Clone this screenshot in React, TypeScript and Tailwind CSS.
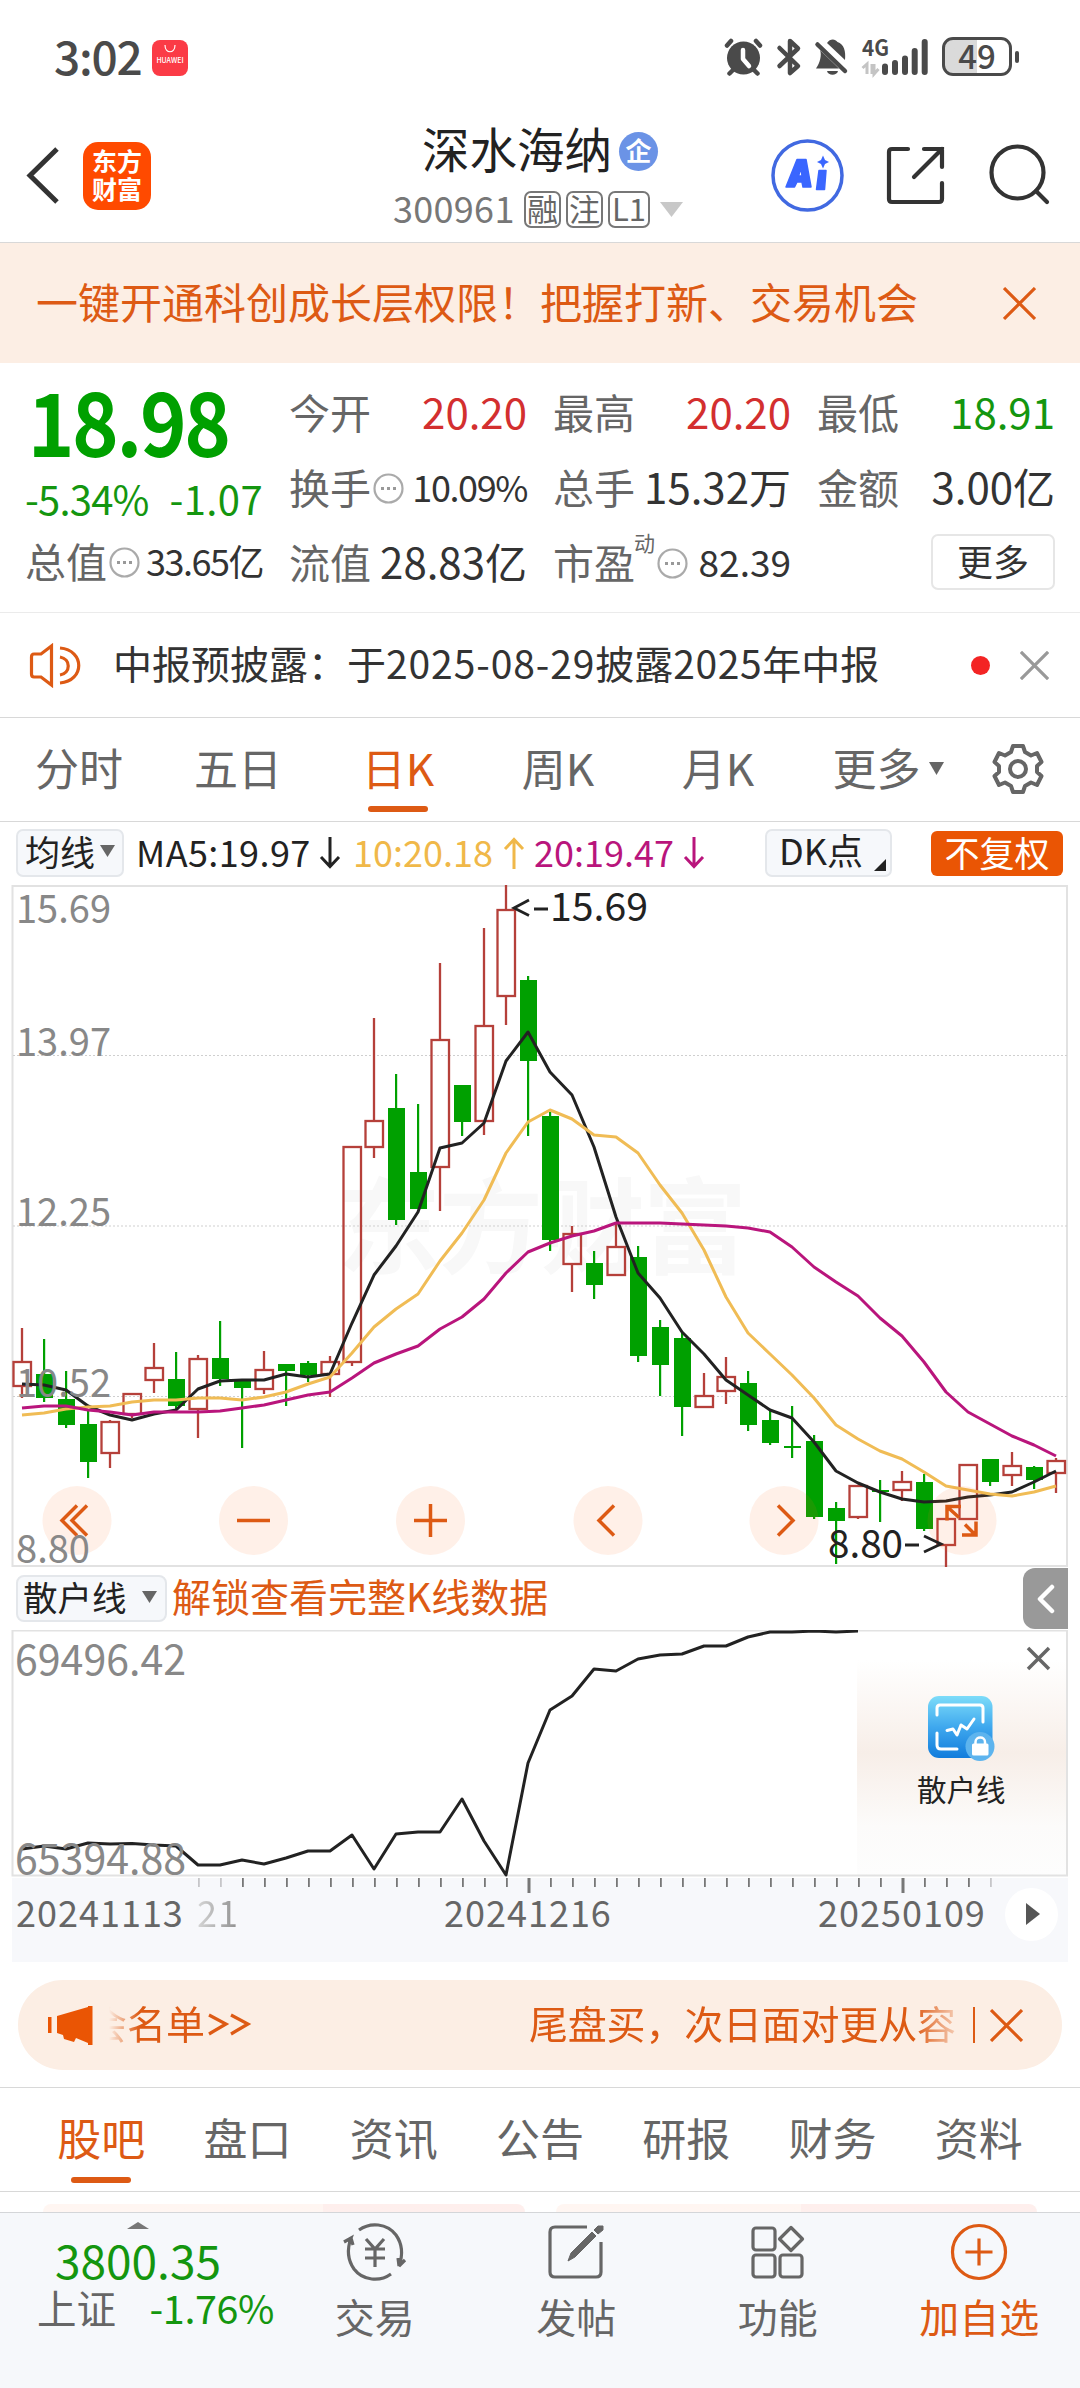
import type { ReactNode } from "react";

type Candle = [kind: "up" | "down", top: number, bottom: number, high: number, low: number];

const STEP = 22;
const FIRST_X = 22;

// body top / body bottom / high / low, in chart units
const CANDLES: Candle[] = [
  ["up", 1362, 1386, 1328, 1398],
  ["down", 1374, 1398, 1339, 1402],
  ["down", 1399, 1425, 1371, 1428],
  ["down", 1424, 1462, 1411, 1478],
  ["up", 1422, 1453, 1420, 1468],
  ["up", 1394, 1414, 1394, 1418],
  ["up", 1368, 1380, 1343, 1393],
  ["down", 1379, 1406, 1352, 1410],
  ["up", 1359, 1409, 1355, 1438],
  ["down", 1358, 1379, 1321, 1386],
  ["down", 1381, 1388, 1380, 1448],
  ["up", 1370, 1389, 1351, 1394],
  ["down", 1364, 1371, 1364, 1406],
  ["down", 1363, 1375, 1361, 1382],
  ["up", 1362, 1374, 1356, 1397],
  ["up", 1147, 1362, 1147, 1366],
  ["up", 1121, 1147, 1018, 1158],
  ["down", 1108, 1220, 1074, 1225],
  ["down", 1172, 1209, 1104, 1209],
  ["up", 1040, 1167, 963, 1211],
  ["down", 1085, 1122, 1085, 1136],
  ["up", 1026, 1121, 928, 1135],
  ["up", 910, 996, 885, 1025],
  ["down", 980, 1061, 976, 1136],
  ["down", 1116, 1240, 1112, 1251],
  ["up", 1234, 1264, 1226, 1292],
  ["down", 1263, 1285, 1251, 1299],
  ["up", 1247, 1275, 1222, 1275],
  ["down", 1257, 1356, 1246, 1362],
  ["down", 1327, 1365, 1320, 1396],
  ["down", 1338, 1407, 1333, 1436],
  ["up", 1396, 1407, 1373, 1407],
  ["up", 1377, 1391, 1357, 1404],
  ["down", 1383, 1425, 1371, 1431],
  ["down", 1420, 1443, 1411, 1445],
  ["down", 1446, 1448, 1406, 1458],
  ["down", 1441, 1517, 1435, 1519],
  ["down", 1508, 1521, 1502, 1564],
  ["up", 1486, 1517, 1486, 1519],
  ["down", 1490, 1492, 1480, 1522],
  ["up", 1482, 1490, 1471, 1501],
  ["down", 1482, 1529, 1474, 1531],
  ["up", 1519, 1545, 1518, 1567],
  ["up", 1465, 1519, 1465, 1519],
  ["down", 1459, 1482, 1459, 1486],
  ["up", 1466, 1475, 1452, 1486],
  ["down", 1467, 1480, 1466, 1489],
  ["up", 1461, 1473, 1458, 1493],
];

const MA5 = [
  1384, 1385, 1390, 1406, 1415, 1420, 1414, 1410, 1389, 1381, 1380, 1380, 1374, 1377, 1374, 1323,
  1275, 1246, 1212, 1148, 1143, 1123, 1061, 1032, 1072, 1095, 1147, 1217, 1273, 1298, 1332, 1354,
  1380, 1395, 1410, 1418, 1442, 1471, 1483, 1492, 1499, 1502, 1501, 1497, 1495, 1492, 1482, 1471,
];

const MA10 = [
  1415, 1413, 1409, 1407, 1406, 1402, 1400, 1400, 1398, 1398, 1400, 1397, 1392, 1384, 1377, 1353,
  1327, 1309, 1294, 1261, 1233, 1200, 1153, 1122, 1110, 1119, 1135, 1137, 1153, 1185, 1213, 1250,
  1297, 1333, 1354, 1375, 1398, 1425, 1439, 1451, 1459, 1472, 1486, 1490, 1494, 1496, 1492, 1486,
];

const MA20 = [
  1408, 1406, 1406, 1410, 1412, 1415, 1412, 1412, 1412, 1411, 1408, 1405, 1400, 1395, 1392, 1378,
  1363, 1354, 1346, 1329, 1317, 1299, 1273, 1252, 1243, 1236, 1231, 1223, 1223, 1223, 1224, 1225,
  1226, 1228, 1232, 1247, 1267, 1282, 1296, 1318, 1336, 1362, 1392, 1412, 1424, 1436, 1445, 1456,
];

const RETAIL = [
  1849, 1846, 1849, 1843, 1844, 1843.5, 1845, 1846, 1865, 1865, 1860, 1864, 1858, 1851, 1851, 1835,
  1869, 1834, 1832, 1832, 1799, 1841, 1875, 1763, 1710, 1696, 1669, 1671, 1659, 1655, 1654, 1646,
  1646, 1637, 1632, 1632, 1631, 1632, 1631,
];

const AXIS_TICKS = Array.from({ length: 37 }, (_, i) => i + 8);

const Y_LABELS = [
  { text: "15.69", y: 923, length: 95 },
  { text: "13.97", y: 1056, length: 95 },
  { text: "12.25", y: 1226, length: 95 },
  { text: "10.52", y: 1397, length: 95 },
  { text: "8.80", y: 1563, length: 74 },
];

const PERIODS = ["分时", "五日", "日K", "周K", "月K", "更多"];
const SECTIONS = ["股吧", "盘口", "资讯", "公告", "研报", "财务", "资料"];

const xAt = (i: number) => FIRST_X + i * STEP;
const toPoints = (ys: number[]) => ys.map((y, i) => `${xAt(i)},${y}`).join(" ");

function Cross({ size, color, width = 3 }: { size: number; color: string; width?: number }) {
  return (
    <svg width={size} height={size} viewBox="0 0 32 32" fill="none" stroke={color} strokeWidth={width}>
      <path d="M1 1 31 31M31 1 1 31" />
    </svg>
  );
}

function Triangle({ width, height, color }: { width: number; height: number; color: string }) {
  return (
    <svg width={width} height={height} viewBox="0 0 10 10" preserveAspectRatio="none">
      <path d="M0 0H10L5 10Z" fill={color} />
    </svg>
  );
}

function StatusBar() {
  return (
    <div className="flex h-[116px] items-start pl-[54px] text-[#4a4a4a]">
      <span className="mt-[32px] w-[98px] text-[46px] leading-[46px] font-medium tracking-[-1.2px]">3:02</span>
      <div className="mt-[40px] flex h-9 w-9 flex-col items-center rounded-[8px] bg-[#fb3b46]">
        <svg className="mt-[5px]" width="12" height="8" viewBox="0 0 12 8" fill="none" stroke="#fff" strokeWidth="1.2">
          <path d="M1 0C1 9 11 9 11 0" />
        </svg>
        <span className="mt-[3px] text-[7px] leading-[8px] font-medium text-white">HUAWEI</span>
      </div>
      <svg className="mt-[38px] ml-[535px]" width="214" height="40" viewBox="724 38 214 40" fill="#4a4a4a">
        {/* alarm */}
        <circle cx="744.5" cy="58" r="16.5" />
        <path d="M744 50v9l6 7" fill="none" stroke="#fff" strokeWidth="4.5" strokeLinecap="round" strokeLinejoin="round" />
        <path d="M728 45.500l4-4.500M761 45.500l-4-4.500M734 70l-3.500 3.500M755 70l3.500 3.500" stroke="#4a4a4a" strokeWidth="4.500" strokeLinecap="round" />
        {/* bluetooth */}
        <path
          d="M780.500 48 799 66 791 73V41L799 48.500 780.500 66"
          fill="none"
          stroke="#4a4a4a"
          strokeWidth="4.500"
          strokeLinecap="round"
          strokeLinejoin="round"
        />
        {/* muted bell */}
        <path d="M821 50C823 55 821 63 817 68.500H840Z" />
        <path d="M828 43C831 38.500 836 38.500 838.500 42 845 44 847 51 846 60Z" />
        <path d="M818.500 44.500 846 71" stroke="#4a4a4a" strokeWidth="4.500" strokeLinecap="round" />
        <path d="M828 71h11c-1 5-10 5-11 0Z" />
        {/* signal */}
        <text x="863" y="56" fontSize="22" fontWeight="700" textLength="27" lengthAdjust="spacingAndGlyphs">4G</text>
        <path d="M863.500 68 868 64V74M873 74V64M875 64V74L879.500 69" fill="none" stroke="#c4c4c4" strokeWidth="3" />
        <path d="M886 66.500V72M896 63V72M906 58.500V72M915.700 51V72M925.700 42V72" stroke="#4a4a4a" strokeWidth="6" strokeLinecap="round" />
      </svg>
      <div className="mt-[37px] ml-[5px] flex h-[39px] w-[70px] items-center justify-center rounded-[11px] border-[3px] border-[#4a4a4a] bg-linear-to-r from-[#dadada] from-50% to-white to-50%">
        <span className="pb-[3px] text-[33px] leading-[32px] font-medium">49</span>
      </div>
      <div className="mt-[51px] ml-[3px] h-3 w-[4px] rounded-full bg-[#4a4a4a]" />
    </div>
  );
}

function Tag({ children, className }: { children: ReactNode; className: string }) {
  return (
    <span
      className={`flex h-[37px] items-center justify-center rounded-[7px] border-2 border-[#777] pb-[3px] text-[31px] leading-[32px] ${className}`}
    >
      {children}
    </span>
  );
}

function Header() {
  return (
    <header className="flex h-[127px] items-start border-b border-[#d8d8d8]">
      <svg className="mt-[30px] ml-[24px]" width="38" height="58" viewBox="24 146 38 58" fill="none" stroke="#333" strokeWidth="5">
        <path d="M57 149 30 175.500 57 202" />
      </svg>
      <div className="mt-[26px] ml-[21px] flex h-[68px] w-[68px] flex-col items-center rounded-[15px] bg-[#ff4a00] pt-[4px] text-[25px] leading-[28px] font-bold text-white">
        <span>东方</span>
        <span>财富</span>
      </div>
      <div className="ml-[141px] flex w-[501px] flex-col items-center">
        <div className="mt-[4px] flex h-[60px] w-full items-center pl-[130px]">
          <span className="pb-[5px] text-[47.5px] leading-[50px] text-[#222]">深水海纳</span>
          <span className="mt-[2px] ml-[7px] flex h-[39px] w-[39px] items-center justify-center rounded-full bg-[#6b93e6] pb-[2px] text-[26px] leading-none font-bold text-white">
            企
          </span>
        </div>
        <div className="mt-[10px] flex h-[38px] w-full items-center pl-[101px] text-[#666]">
          <span className="w-[131px] pb-[4px] text-[36px] leading-[38px] tracking-[0.3px] text-[#777]">300961</span>
          <Tag className="w-[37px]">融</Tag>
          <Tag className="ml-[5px] w-[37px]">注</Tag>
          <Tag className="ml-[5px] w-[42px]">L1</Tag>
          <span className="ml-[10px]">
            <Triangle width={23} height={15} color="#c8c8c8" />
          </span>
        </div>
      </div>
      <svg className="mt-[22px] -ml-[24px]" width="290" height="76" viewBox="770 138 290 76" fill="none">
        <circle cx="808.500" cy="175.500" r="34.500" stroke="#4169e1" strokeWidth="3.500" />
        <path
          fillRule="evenodd"
          d="M787 187 798 159.500H807L812 187H804L803 182H798L795.500 187ZM799.500 176H803L802 168Z"
          fill="#3a66ff"
          stroke="#3a66ff"
          strokeWidth="1.500"
          strokeLinejoin="round"
        />
        <path d="M820 170.500h7l-1.500 19H817.500Z" fill="#3a66ff" stroke="#3a66ff" strokeWidth="1.500" strokeLinejoin="round" />
        <path d="M824 155.500l2 4.500 4 2-4 2-2 4.500-2-4.500-4-2 4-2Z" fill="#3a66ff" />
        <g stroke="#333" strokeWidth="4.200" strokeLinecap="round">
          <path d="M909 149H893Q890 149 890 152V199Q890 202 893 202H940Q943 202 943 199V183" />
          <path d="M925 149H943V167M943 149 915 177" />
          <circle cx="1018.500" cy="172.500" r="26" />
          <path d="M1037 191 1048 202" />
        </g>
      </svg>
    </header>
  );
}

function PromoBanner() {
  return (
    <div className="flex h-[120px] items-center justify-between bg-[#fceee4] pr-[44px] pl-[36px] text-[#dd5a14]">
      <span className="pb-[5px] text-[42px] leading-[50px]">一键开通科创成长层权限！把握打新、交易机会</span>
      <Cross size={33} color="#dd5a14" />
    </div>
  );
}

function Dots() {
  return (
    <svg className="ml-[2px]" width="31" height="31" viewBox="0 0 31 31" fill="none" stroke="#aaa" strokeWidth="2.200">
      <circle cx="15.500" cy="15.500" r="14" />
      <path d="M8 15.500h3M14 15.500h3M20 15.500h3" stroke="#999" strokeWidth="3" />
    </svg>
  );
}

type StatProps = { label: string; value: string; info?: boolean; sup?: string; tone?: string; size?: string };

function Stat({ label, value, info, sup, tone = "text-[#333]", size = "text-[42px]" }: StatProps) {
  return (
    <div className="flex h-[75px] items-center justify-between">
      <span className="flex items-center text-[#666]">
        <span className="pb-[5px] text-[41px] leading-[44px]">{label}</span>
        {sup && <span className="-ml-[1px] pb-[42px] text-[21px] leading-[21px]">{sup}</span>}
        {info && <Dots />}
      </span>
      <span className={`pb-[5px] leading-[44px] whitespace-nowrap ${size} ${tone}`}>{value}</span>
    </div>
  );
}

function Quote() {
  return (
    <section className="flex h-[250px] gap-[26px] border-b border-[#ebebeb] pt-[13px] pr-[25px] pl-[25px]">
      <div className="w-[238px]">
        <div className="flex h-[98px] origin-left scale-x-[0.9] items-center pb-[13px] pl-[3px] text-[88px] leading-[85px] font-bold tracking-[-2.6px] text-[#00a000]">
          18.98
        </div>
        <div className="flex h-[51px] items-center justify-between pb-[4px] text-[40px] leading-[44px] text-[#14960f]">
          <span className="tracking-[-0.8px]">-5.34%</span>
          <span className="tracking-[0.4px]">-1.07</span>
        </div>
        <Stat label="总值" value="33.65亿" info size="text-[36px] tracking-[-1.5px]" />
      </div>
      <div className="w-[238px]">
        <Stat label="今开" value="20.20" tone="text-[#d32f2f]" />
        <Stat label="换手" value="10.09%" info size="text-[36px] tracking-[-1.4px]" />
        <Stat label="流值" value="28.83亿" />
      </div>
      <div className="w-[238px]">
        <Stat label="最高" value="20.20" tone="text-[#d32f2f]" />
        <Stat label="总手" value="15.32万" />
        <Stat label="市盈" value="82.39" info sup="动" size="text-[37px]" />
      </div>
      <div className="flex w-[238px] flex-col">
        <Stat label="最低" value="18.91" tone="text-[#14960f]" />
        <Stat label="金额" value="3.00亿" />
        <div className="mt-[8px] flex h-[56px] w-[124px] items-center justify-center self-end rounded-[7px] border-2 border-[#e6e6e6] pb-[5px] text-[36px] leading-[40px] text-[#333]">
          更多
        </div>
      </div>
    </section>
  );
}

function Notice() {
  return (
    <div className="flex h-[105px] items-center border-b border-[#d8d8d8] pl-[28px]">
      <svg width="54" height="46" viewBox="28 641 54 46" fill="none" stroke="#dd5a14" strokeWidth="3.200">
        <path d="M51.500 645V684L41 676H34Q31.500 676 31.500 673V656Q31.500 653 34 653H41Z" />
        <path d="M60 647C85 649 85 680 60 682M60 656C71 658 71 672 60 674" />
      </svg>
      <span className="ml-[31px] w-[858px] pb-[6px] text-[39px] leading-[44px] text-[#333]">
        中报预披露：于<span className="tracking-[0.9px]">2025-08-29</span>披露<span className="tracking-[0.6px]">2025</span>年中报
      </span>
      <span className="h-[19px] w-[19px] shrink-0 rounded-full bg-[#f32424]" />
      <span className="ml-[30px]">
        <Cross size={29} color="#999" width={3.6} />
      </span>
    </div>
  );
}

function PeriodTabs() {
  return (
    <nav className="flex h-[104px] items-start border-b border-[#d8d8d8] text-[#666]">
      {PERIODS.map((label) => {
        const active = label === "日K";
        return (
          <div
            key={label}
            className={`flex w-[160px] flex-col items-center first:w-[158px] last-of-type:w-[180px] ${active ? "text-[#dd5a14]" : ""}`}
          >
            <span className="mt-[23px] flex h-[53px] items-center text-[44px] leading-[53px]">
              {label}
              {label === "更多" && (
                <span className="mt-[2px] ml-[8px] flex">
                  <Triangle width={15} height={13} color="#666" />
                </span>
              )}
            </span>
            {active && <span className="mt-[12px] h-[6px] w-[60px] rounded-full bg-[#dd5a14]" />}
          </div>
        );
      })}
      <svg className="mt-[24px] ml-[13px]" width="54" height="54" viewBox="-27 -27 54 54" fill="none" stroke="#666" strokeWidth="4" strokeLinejoin="round">
        <path d="M-5-23H5L7-17 13-13.500 19-16 23.500-7 19-3V3L23.500 7 19 16 13 13.500 7 17 5 23H-5L-7 17-13 13.500-19 16-23.500 7-19 3V-3L-23.500-7-19-16-13-13.500-7-17Z" />
        <circle r="8" />
      </svg>
    </nav>
  );
}

function Arrow({ up }: { up?: boolean }) {
  return (
    <svg className={up ? "rotate-180" : ""} width="22" height="32" viewBox="0 0 22 32" fill="none" stroke="currentColor" strokeWidth="3">
      <path d="M11 0V29M2 20 11 29.500 20 20" />
    </svg>
  );
}

function IndicatorBar() {
  return (
    <div className="flex h-[63px] items-start pt-[7px] pl-[16px] text-[36px] leading-[40px]">
      <div className="flex h-[48px] w-[108px] items-center justify-between rounded-[7px] border-2 border-[#e4e7eb] bg-[#f6f8fb] pr-[7px] pb-[4px] pl-[7px] text-[35px] text-[#222]">
        均线
        <Triangle width={15} height={12} color="#666" />
      </div>
      <div className="ml-[12px] flex h-[48px] w-[216px] items-center gap-[7px] text-[#222]">
        <span className="w-[176px] pb-[5px] tracking-[0.4px]">MA5:19.97</span>
        <Arrow />
      </div>
      <div className="ml-[1px] flex h-[48px] w-[180px] items-center gap-[7px] text-[#f0b849]">
        <span className="w-[143px] pb-[5px]">10:20.18</span>
        <Arrow up />
      </div>
      <div className="ml-[1px] flex h-[48px] w-[231px] items-center gap-[6px] text-[#b9157c]">
        <span className="w-[143px] pb-[5px]">20:19.47</span>
        <Arrow />
      </div>
      <div className="flex h-[48px] w-[127px] items-end justify-between rounded-[7px] border-2 border-[#e4e7eb] bg-[#f6f8fb] pr-[4px] pb-[4px] pl-[12px] text-[#222]">
        <span className="pb-[2px]">DK点</span>
        <svg width="12" height="12" viewBox="0 0 12 12">
          <path d="M12 0V12H0Z" fill="#222" />
        </svg>
      </div>
      <div className="mt-[2px] ml-[39px] flex h-[45px] w-[132px] items-center justify-center rounded-[6px] bg-[#ea5504] pb-[4px] text-[35px] text-white">
        不复权
      </div>
    </div>
  );
}

function PanButton({ cx, children }: { cx: number; children: ReactNode }) {
  return (
    <g transform={`translate(${cx} 1520.500)`}>
      <circle r="34.500" fill="#ff6a1a" fillOpacity="0.1" />
      <g fill="none" stroke="#dd5a14" strokeWidth="3.500">
        {children}
      </g>
    </g>
  );
}

function KLineChart() {
  return (
    <svg className="block" width="1080" height="683" viewBox="0 885 1080 683">
      <rect x="12.500" y="886" width="1054.500" height="680" fill="none" stroke="#e2e2e2" strokeWidth="2" />
      <text x="337" y="1266" fontSize="104" fontWeight="700" fill="#f8f8f8" textLength="410">东方财富</text>
      {[1055.5, 1226, 1396.5].map((y) => (
        <path key={y} d={`M13 ${y}H1067`} stroke="#cfcfcf" strokeWidth="1" strokeDasharray="2 2" />
      ))}

      {CANDLES.map(([kind, top, bottom, high, low], i) => {
        const x = xAt(i);
        return kind === "up" ? (
          <g key={i} fill="none" stroke="#b5403a" strokeWidth="2.300">
            <path d={`M${x} ${high}V${top}M${x} ${bottom}V${low}`} />
            <rect x={x - 8.5} y={top} width="17.500" height={bottom - top} />
          </g>
        ) : (
          <g key={i} fill="#00a000">
            <rect x={x - 1} y={high} width="2.200" height={low - high} />
            <rect x={x - 8} y={top} width="17" height={bottom - top} />
          </g>
        );
      })}

      <g fill="none" strokeWidth="3" strokeLinejoin="round">
        <polyline points={toPoints(MA5)} stroke="#222" />
        <polyline points={toPoints(MA10)} stroke="#f0bc55" />
        <polyline points={toPoints(MA20)} stroke="#b9157c" />
      </g>

      <PanButton cx={77}>
        <path d="M0-15-15 0 0 15M10-15-5 0 10 15" />
      </PanButton>
      <PanButton cx={253.5}>
        <path d="M-16.500 0H16.500" />
      </PanButton>
      <PanButton cx={430.5}>
        <path d="M-16.500 0H16.500M0-16.500V16.500" />
      </PanButton>
      <PanButton cx={608}>
        <path d="M6-15-9 0 6 15" />
      </PanButton>
      <PanButton cx={784}>
        <path d="M-6-15 9 0-6 15" />
      </PanButton>
      <PanButton cx={962}>
        <path d="M-15 0V-14H-1M-14-13-3-3M0 14.500H14V1M13 14 3 4" />
      </PanButton>

      <g fontSize="39.500" fill="#888">
        {Y_LABELS.map(({ text, y, length }) => (
          <text key={text} x="16" y={y} textLength={length} lengthAdjust="spacingAndGlyphs">
            {text}
          </text>
        ))}
      </g>
      <g fontSize="39.500" fill="#222">
        <text x="550" y="921" textLength="98" lengthAdjust="spacingAndGlyphs">15.69</text>
        <path d="M529 900 514 908 529 915.500M534 909H548" fill="none" stroke="#222" strokeWidth="2.800" />
        <text x="828" y="1558" textLength="75" lengthAdjust="spacingAndGlyphs">8.80</text>
        <path d="M905 1545H919M924 1536 941 1544 924 1552" fill="none" stroke="#222" strokeWidth="2.800" />
      </g>
    </svg>
  );
}

function SubIndicatorBar() {
  return (
    <div className="flex h-[62px] items-start pl-[16px]">
      <div className="mt-[7px] flex h-[47px] w-[151px] items-center justify-between rounded-[8px] border-2 border-[#e4e7eb] bg-[#f6f8fb] pr-[8px] pb-[6px] pl-[5px] text-[34.5px] leading-[40px] text-[#222]">
        散户线
        <span className="mt-[3px]">
          <Triangle width={15} height={12} color="#666" />
        </span>
      </div>
      <span className="mt-[4px] ml-[5px] text-[39px] leading-[46px] text-[#dd5a14]">解锁查看完整K线数据</span>
      <div className="mr-[12px] ml-auto flex h-[61px] w-[45px] items-center justify-center rounded-l-[12px] bg-[#999]">
        <svg width="18" height="30" viewBox="0 0 18 30" fill="none" stroke="#fff" strokeWidth="4.500" strokeLinecap="round" strokeLinejoin="round">
          <path d="M15 3 3 15 15 27" />
        </svg>
      </div>
    </div>
  );
}

function RetailChart() {
  return (
    <svg className="block" width="1080" height="248" viewBox="0 1630 1080 248">
      <defs>
        <linearGradient id="lockedFade" x1="0" y1="0" x2="0" y2="1">
          <stop offset="0.12" stopColor="#fff" />
          <stop offset="0.5" stopColor="#f7eee8" />
          <stop offset="0.8" stopColor="#fcfbfa" />
          <stop offset="1" stopColor="#fdfdfd" />
        </linearGradient>
        <linearGradient id="lockedIcon" x1="0" y1="0" x2="0" y2="1">
          <stop offset="0" stopColor="#7ddcf9" />
          <stop offset="0.5" stopColor="#3fa8ee" />
          <stop offset="1" stopColor="#127cdc" />
        </linearGradient>
      </defs>
      <rect x="857" y="1631" width="209" height="244" fill="url(#lockedFade)" />
      <rect x="12.500" y="1630.500" width="1054.500" height="245" fill="none" stroke="#e2e2e2" strokeWidth="2" />
      <polyline points={toPoints(RETAIL)} fill="none" stroke="#222" strokeWidth="3" strokeLinejoin="round" />
      <g fontSize="41.500" fill="#888">
        <text x="15" y="1675" textLength="171" lengthAdjust="spacingAndGlyphs">69496.42</text>
        <text x="15" y="1874" textLength="171" lengthAdjust="spacingAndGlyphs">65394.88</text>
      </g>
      <path d="M1028 1648 1049 1669M1049 1648 1028 1669" stroke="#666" strokeWidth="3.500" />
      <rect x="928" y="1696" width="64.500" height="62" rx="11" fill="url(#lockedIcon)" />
      <g fill="none" stroke="#fff" strokeWidth="3" strokeLinecap="round" strokeLinejoin="round">
        <path d="M937 1715V1708Q937 1705 940 1705H980Q983 1705 983 1708V1722M937 1733V1745Q937 1749 941 1749H957" />
        <path d="M947 1730.500 953 1729 957 1735 961 1725 967 1729 974 1719" />
      </g>
      <circle cx="980" cy="1746.500" r="14.500" fill="#5db4ee" />
      <rect x="972" y="1743.500" width="16.500" height="12" rx="1.500" fill="#fff" />
      <path d="M975.500 1744V1742C975.500 1736 985 1736 985 1742V1744" fill="none" stroke="#fff" strokeWidth="2.500" />
      <text x="917" y="1801" fontSize="29.500" fill="#222">散户线</text>
    </svg>
  );
}

function DateAxis() {
  return (
    <div className="mx-[12px] h-[84px] bg-[#f7f8fb] text-[#666]">
      <svg className="block" width="1056" height="16" viewBox="12 1878 1056 16">
        {AXIS_TICKS.map((i) => {
          const major = i === 23 || i === 40;
          const faint = i < 10 || i === 44;
          return (
            <rect
              key={i}
              x={xAt(i) - (major ? 0.5 : 0)}
              y="1878"
              width={major ? 3 : 1.8}
              height={major ? 15 : 9}
              fill={faint ? "#c6c6c9" : "#777"}
            />
          );
        })}
      </svg>
      <div className="flex h-[40px] items-center text-[36px] leading-[40px] tracking-[1px]">
        <span className="w-[181px] pb-[7px] pl-[4px]">20241113</span>
        <span className="w-[251px] bg-linear-to-r from-[#ddd] to-[#888] to-20% bg-clip-text pb-[7px] pl-[4px] text-transparent">21</span>
        <span className="w-[374px] pb-[7px]">20241216</span>
        <span className="w-[187px] pb-[7px]">20250109</span>
        <span className="flex h-[53px] w-[53px] shrink-0 items-center justify-center rounded-full bg-white pl-[2px]">
          <svg width="14" height="22" viewBox="0 0 14 22">
            <path d="M0 0V22L14 11Z" fill="#555" />
          </svg>
        </span>
      </div>
    </div>
  );
}

function Marquee() {
  return (
    <div className="mx-[18px] mt-[18px] flex h-[90px] items-center rounded-full bg-[#fceee4] text-[39px] leading-[44px] text-[#dd5a14]">
      <svg className="ml-[29px] shrink-0" width="48" height="42" viewBox="47 2003 48 42" fill="#ea5504">
        <path d="M48 2016h3.500V2032H48ZM57 2015 88 2006V2042L76 2037 74 2041 64 2038 63 2034 57 2032Z" />
        <rect x="88" y="2005" width="4.500" height="39" />
      </svg>
      <div className="ml-[14px] flex w-[145px] shrink-0 justify-end overflow-hidden pb-[6px] whitespace-nowrap [mask-image:linear-gradient(to_right,transparent,black_30px)]">
        <span>会名单</span>
        <svg className="mt-[9px] ml-[3px] shrink-0" width="46" height="30" viewBox="0 0 46 30" fill="none" stroke="#dd5a14" strokeWidth="3.200">
          <path d="M1 6 18 15 1 25M23 6 40 15 23 25" />
        </svg>
      </div>
      <span className="ml-[275px] w-[429px] shrink-0 pb-[7px] tracking-[-0.2px] whitespace-nowrap [mask-image:linear-gradient(to_right,black_385px,transparent_440px)]">
        尾盘买，次日面对更从容
      </span>
      <span className="ml-[15px] h-[36px] w-[2px] shrink-0 bg-[#dd5a14]" />
      <span className="ml-[15px] shrink-0">
        <Cross size={33} color="#dd5a14" />
      </span>
    </div>
  );
}

function SectionTabs() {
  return (
    <nav className="mt-[17px] flex h-[105px] border-y border-[#d8d8d8] px-[28px] text-[#666]">
      {SECTIONS.map((label, i) => (
        <div key={label} className={`flex flex-1 flex-col items-center ${i === 0 ? "text-[#dd5a14]" : ""}`}>
          <span className="mt-[23px] h-[53px] text-[44px] leading-[53px]">{label}</span>
          {i === 0 && <span className="mt-[13px] h-[6px] w-[60px] rounded-full bg-[#dd5a14]" />}
        </div>
      ))}
    </nav>
  );
}

function CardPeek() {
  return (
    <div className="flex h-[20px] gap-[31px] px-[43px] pt-[12px]">
      <div className="h-[8px] w-[486px] rounded-t-[18px] bg-linear-to-r from-[#fff6f2] from-58% to-[#feefed] to-58%" />
      <div className="h-[8px] w-[486px] rounded-t-[18px] bg-linear-to-r from-[#fff6f2] from-51% to-[#feefed] to-51%" />
    </div>
  );
}

function BarItem({ label, active, children }: { label: string; active?: boolean; children: ReactNode }) {
  return (
    <div className={`flex w-[201.500px] flex-col items-center ${active ? "text-[#dd5a14]" : "text-[#666]"}`}>
      <svg className="mt-[6px]" width="68" height="66" viewBox="-34 -33 68 66" fill="none" stroke="currentColor" strokeWidth="3.200">
        {children}
      </svg>
      <span className="mt-[8px] text-[40px] leading-[46px]">{label}</span>
    </div>
  );
}

function BottomBar() {
  return (
    <footer className="flex h-[176px] border-t border-[#d4d6d9] bg-[#f6f8fb]">
      <div className="w-[274px] shrink-0 pt-[9px] pl-[37px] whitespace-nowrap">
        <svg className="ml-[90px] block" width="22" height="7" viewBox="0 0 22 7">
          <path d="M0 7 11 0 22 7Z" fill="#777" />
        </svg>
        <div className="mt-[4px] ml-[18px] text-[46px] leading-[52px] text-[#14960f]">3800.35</div>
        <div className="flex items-center text-[39.5px] leading-[44px] text-[#666]">
          <span className="w-[115px]">上证</span>
          <span className="tracking-[-0.4px] text-[#14960f]">-1.76%</span>
        </div>
      </div>
      <BarItem label="交易">
        <path d="M-16-22C-5-30 12-29 21-17 28-7 28 3 24 14L30 8M24 14 23 6" />
        <path d="M16 22C5 30-12 29-21 17-28 7-28-3-24-14L-31-10M-24-14-22-7" />
        <path d="M-9-13 0-3 9-13M0-3V15M-10-3H10M-10 6H10" />
      </BarItem>
      <BarItem label="发帖">
        <path d="M11-25H-21Q-26-25-26-20V20Q-26 25-21 25H20Q25 25 25 20V-10" />
        <path d="M-8 9-5 1 16-20 20-16-1 5ZM18-22 22-26 27-26V-22L22-18Z" fill="currentColor" stroke="currentColor" strokeWidth="1" />
      </BarItem>
      <BarItem label="功能">
        <rect x="-25" y="-24" width="22" height="22" rx="3" />
        <rect x="-25" y="3" width="22" height="22" rx="3" />
        <rect x="2" y="3" width="22" height="22" rx="3" />
        <path d="M1.500-13 13-24.500 24.500-13 13-1.500Z" strokeLinejoin="round" />
      </BarItem>
      <BarItem label="加自选" active>
        <circle r="26.500" />
        <path d="M-13.500 0H13.500M0-13.500V13.500" />
      </BarItem>
    </footer>
  );
}

export default function App() {
  return (
    <div className="h-[2388px] w-[1080px] overflow-hidden bg-white font-['Noto_Sans_CJK_SC',sans-serif]">
      <StatusBar />
      <Header />
      <PromoBanner />
      <Quote />
      <Notice />
      <PeriodTabs />
      <IndicatorBar />
      <KLineChart />
      <SubIndicatorBar />
      <RetailChart />
      <DateAxis />
      <Marquee />
      <SectionTabs />
      <CardPeek />
      <BottomBar />
    </div>
  );
}
